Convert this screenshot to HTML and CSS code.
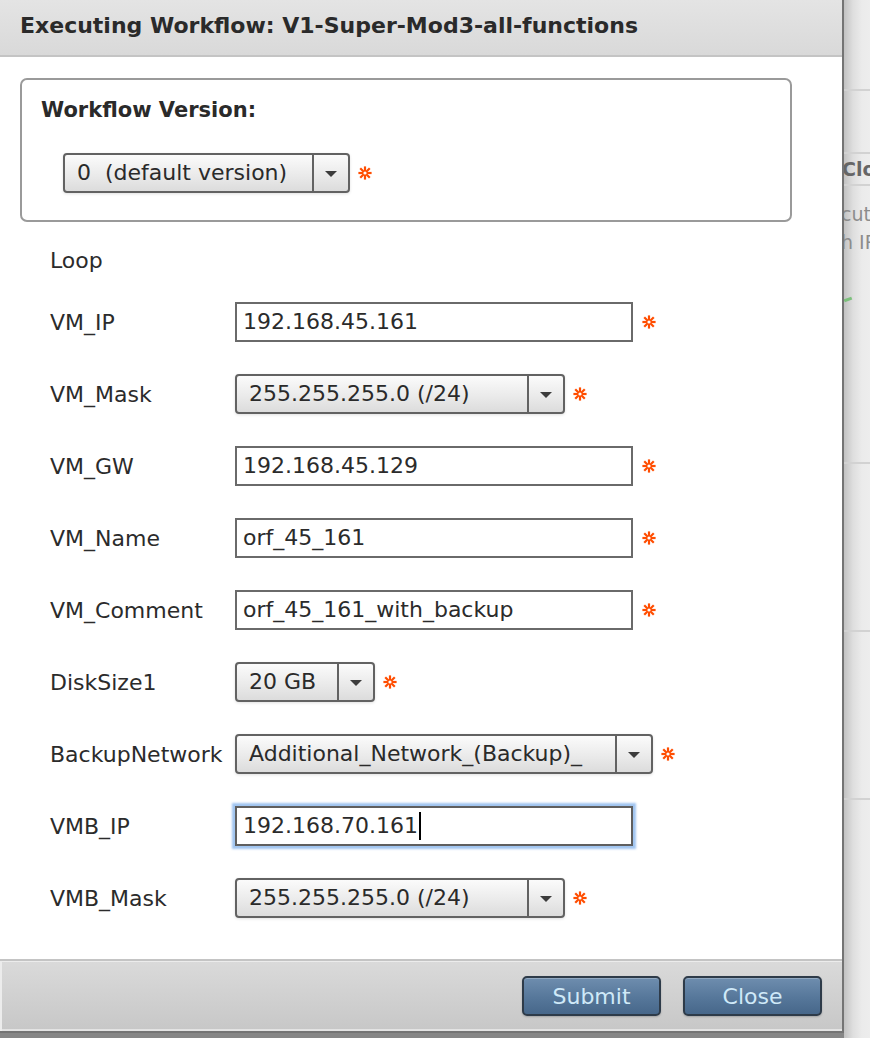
FILE: index.html
```html
<!DOCTYPE html>
<html>
    <head>
        <title>Executing Workflow</title>
        <meta name="viewport" content="width=device-width, initial-scale=1">
        <link rel="stylesheet" href="styles.css">
    </head>

    <body>
        <svg class="defs" width="0" height="0">
            <symbol id="req" viewBox="0 0 14 14">
                <g stroke="#ff4d00" stroke-width="2.2" stroke-linecap="square">
                    <line x1="7" y1="1.5" x2="7" y2="12.5"/>
                    <line x1="1.5" y1="7" x2="12.5" y2="7"/>
                    <line x1="3" y1="3" x2="11" y2="11"/>
                    <line x1="11" y1="3" x2="3" y2="11"/>
                </g>
                <circle cx="7" cy="7" r="1.6" fill="#fff"/>
            </symbol>
        </svg>

        <div class="screen">
            <div class="dialog">
                <div class="dialog-header">Executing Workflow: V1-Super-Mod3-all-functions</div>

                <div class="dialog-body">
                    <div class="version-box">
                        <div class="version-title">Workflow Version:</div>
                        <div class="version-row">
                            <div class="select w-version">
                                <span class="select-value">0&nbsp; (default version)</span>
                                <span class="select-arrow"></span>
                            </div>
                            <svg class="req"><use href="#req"/></svg>
                        </div>
                    </div>

                    <div class="form-rows">
                        <div class="form-row loop-row"><span class="label">Loop</span></div>

                        <div class="form-row">
                            <span class="label">VM_IP</span>
                            <div class="field">192.168.45.161</div>
                            <svg class="req"><use href="#req"/></svg>
                        </div>

                        <div class="form-row">
                            <span class="label">VM_Mask</span>
                            <div class="select w-mask">
                                <span class="select-value">255.255.255.0 (/24)</span>
                                <span class="select-arrow"></span>
                            </div>
                            <svg class="req"><use href="#req"/></svg>
                        </div>

                        <div class="form-row">
                            <span class="label">VM_GW</span>
                            <div class="field">192.168.45.129</div>
                            <svg class="req"><use href="#req"/></svg>
                        </div>

                        <div class="form-row">
                            <span class="label">VM_Name</span>
                            <div class="field">orf_45_161</div>
                            <svg class="req"><use href="#req"/></svg>
                        </div>

                        <div class="form-row">
                            <span class="label">VM_Comment</span>
                            <div class="field">orf_45_161_with_backup</div>
                            <svg class="req"><use href="#req"/></svg>
                        </div>

                        <div class="form-row">
                            <span class="label">DiskSize1</span>
                            <div class="select w-disk">
                                <span class="select-value">20 GB</span>
                                <span class="select-arrow"></span>
                            </div>
                            <svg class="req"><use href="#req"/></svg>
                        </div>

                        <div class="form-row">
                            <span class="label">BackupNetwork</span>
                            <div class="select w-backup">
                                <span class="select-value">Additional_Network_(Backup)_</span>
                                <span class="select-arrow"></span>
                            </div>
                            <svg class="req"><use href="#req"/></svg>
                        </div>

                        <div class="form-row">
                            <span class="label">VMB_IP</span>
                            <div class="field focused">192.168.70.161<span class="caret"></span></div>
                        </div>

                        <div class="form-row">
                            <span class="label">VMB_Mask</span>
                            <div class="select w-mask">
                                <span class="select-value">255.255.255.0 (/24)</span>
                                <span class="select-arrow"></span>
                            </div>
                            <svg class="req"><use href="#req"/></svg>
                        </div>
                    </div>
                </div>

                <div class="dialog-footer">
                    <button class="btn">Submit</button>
                    <button class="btn">Close</button>
                </div>
            </div>

            <!-- page behind the modal, only a sliver shows -->
            <div class="backdrop">
                <div class="bd-top"></div>
                <div class="bd-head">Clo</div>
                <div class="bd-lines">
                    <div class="bd-text">cute</div>
                    <div class="bd-text">h IP</div>
                </div>
                <div class="bd-green"></div>
                <div class="bd-cell tall"></div>
                <div class="bd-cell"></div>
                <div class="bd-cell"></div>
            </div>
        </div>
    </body>
</html>
```

FILE: styles.css
```css
body {
    margin: 0;
    padding: 0;
    background: #868686;
    font-family: "DejaVu Sans", Verdana, sans-serif;
    color: #2b2b2b;
    overflow: hidden;
}

.defs {
    position: absolute;
}

.screen {
    display: flex;
    height: 1038px;
}

.dialog {
    width: 842px;
    flex: none;
    align-self: flex-start;
    background: #fff;
    border-right: 2px solid #747474;
    border-bottom: 2px solid #747474;
}

.dialog-header {
    height: 57px;
    box-sizing: border-box;
    padding: 13px 20px 0;
    background: linear-gradient(#e4e4e4, #d9d9d9);
    border-bottom: 2px solid #c4c4c4;
    font-weight: bold;
    font-size: 22px;
    color: #2a2a2a;
    white-space: nowrap;
}

.dialog-body {
    padding: 21px 50px 41px 20px;
}

.version-box {
    width: 772px;
    box-sizing: border-box;
    border: 2px solid #9a9a9a;
    border-radius: 7px;
    padding: 17px 19px 27px;
}

.version-title {
    font-weight: bold;
    font-size: 21px;
    line-height: 26px;
    color: #2a2a2a;
}

.version-row {
    display: flex;
    align-items: center;
    margin: 30px 0 0 22px;
}

.form-rows {
    display: flex;
    flex-direction: column;
    gap: 32px;
    padding: 18px 0 0 30px;
}

.form-row {
    display: flex;
    align-items: center;
    height: 40px;
}

.loop-row {
    margin-bottom: -10px;
}

.label {
    width: 185px;
    flex: none;
    font-size: 22px;
}

.field {
    width: 398px;
    height: 40px;
    box-sizing: border-box;
    border: 2px solid #6a6a6a;
    padding-left: 6px;
    font-size: 22px;
    line-height: 36px;
    background: #fff;
    display: flex;
    align-items: center;
}

.field.focused {
    border-color: #5f5f5f;
    box-shadow: 0 0 2px 3px rgba(130, 178, 235, 0.75);
}

.caret {
    display: inline-block;
    width: 2px;
    height: 28px;
    background: #000;
    margin-left: 1px;
}

.select {
    display: flex;
    height: 40px;
    box-sizing: border-box;
    border: 2px solid #626262;
    border-radius: 4px;
    background: linear-gradient(#fbfbfb, #e9e9e9 60%, #dcdcdc);
    box-shadow: 0 1px 3px rgba(0, 0, 0, 0.12);
    font-size: 22px;
    line-height: 36px;
    color: #2a2a2a;
}

.select-value {
    flex: 1;
    padding-left: 12px;
    white-space: nowrap;
    overflow: hidden;
}

.select-arrow {
    width: 34px;
    flex: none;
    border-left: 2px solid #626262;
    display: flex;
    align-items: center;
    justify-content: center;
}

.select-arrow::after {
    content: "";
    border-top: 6px solid #3c3c3c;
    border-left: 6px solid transparent;
    border-right: 6px solid transparent;
    margin-top: 1px;
}

.w-version { width: 287px; }
.w-mask { width: 330px; }
.w-disk { width: 140px; }
.w-backup { width: 418px; }

.req {
    width: 14px;
    height: 14px;
    margin-left: 8px;
    flex: none;
}

.field + .req {
    margin-left: 9px;
}

.dialog-footer {
    display: flex;
    justify-content: flex-end;
    gap: 22px;
    padding: 15px 20px 15px;
    border-top: 2px solid #c4c4c4;
    background: linear-gradient(#dadada, #c7c7c7);
    box-shadow: inset 2px 1px 0 #ececec, inset 0 -2px 0 #e3e3e3;
}

.btn {
    width: 139px;
    height: 40px;
    border: 2px solid #2e3b49;
    border-radius: 5px;
    background: linear-gradient(#6e8dae, #56779a 55%, #47678a);
    box-shadow: inset 0 1px 0 rgba(255, 255, 255, 0.25), 0 1px 2px rgba(0, 0, 0, 0.2);
    color: #cfe9f8;
    font-family: "DejaVu Sans", Verdana, sans-serif;
    font-size: 22px;
    padding: 0;
}

.backdrop {
    flex: 1;
    overflow: hidden;
    background: linear-gradient(to right, #c2c2c2, #dedede 9px, #ebebeb 18px, #ededed);
    font-size: 19px;
    color: #8c8c8c;
    white-space: nowrap;
}

.bd-top {
    height: 89px;
    border-bottom: 2px solid #d2d2d2;
}

.bd-head {
    margin-top: 61px;
    height: 30px;
    border-top: 2px solid #d2d2d2;
    border-bottom: 2px solid #d2d2d2;
    font-weight: bold;
    color: #666;
    line-height: 30px;
    text-indent: -2px;
}

.bd-lines {
    margin-top: 14px;
}

.bd-text {
    line-height: 28px;
    text-indent: -3px;
}

.bd-green {
    margin-top: 42px;
    width: 8px;
    height: 3px;
    background: #7cc07c;
    transform: rotate(-20deg);
}

.bd-cell {
    height: 166px;
    border-bottom: 2px solid #d2d2d2;
}

.bd-cell.tall {
    height: 161px;
}
```
